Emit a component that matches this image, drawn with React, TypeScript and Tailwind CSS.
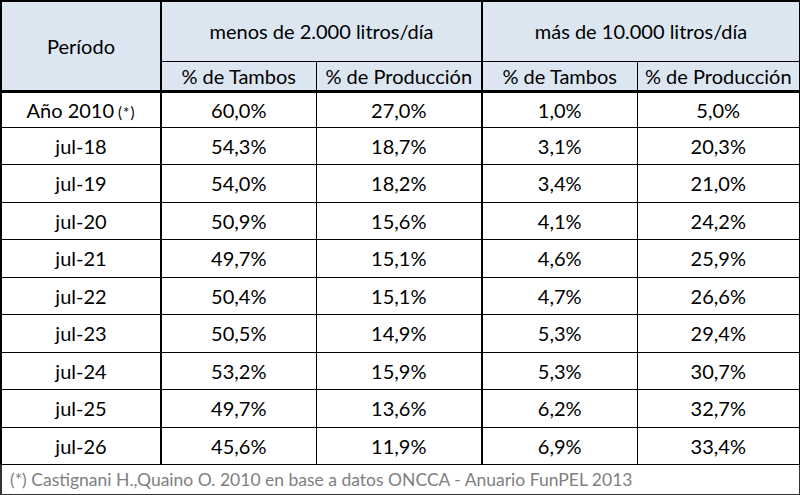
const rows: [string, string, string, string, string][] = [
  ["Año 2010", "60,0%", "27,0%", "1,0%", "5,0%"],
  ["jul-18", "54,3%", "18,7%", "3,1%", "20,3%"],
  ["jul-19", "54,0%", "18,2%", "3,4%", "21,0%"],
  ["jul-20", "50,9%", "15,6%", "4,1%", "24,2%"],
  ["jul-21", "49,7%", "15,1%", "4,6%", "25,9%"],
  ["jul-22", "50,4%", "15,1%", "4,7%", "26,6%"],
  ["jul-23", "50,5%", "14,9%", "5,3%", "29,4%"],
  ["jul-24", "53,2%", "15,9%", "5,3%", "30,7%"],
  ["jul-25", "49,7%", "13,6%", "6,2%", "32,7%"],
  ["jul-26", "45,6%", "11,9%", "6,9%", "33,4%"],
]

export default function App() {
  return (
    <div className="w-[800px] h-[495px] bg-white font-['Lato','Liberation_Sans',sans-serif] text-black overflow-hidden">
      <table className="border-collapse table-fixed w-[799px] text-[20px] leading-none">
        <colgroup>
          <col className="w-[160px]" />
          <col className="w-[155px]" />
          <col className="w-[166px]" />
          <col className="w-[155px]" />
          <col className="w-[163px]" />
        </colgroup>
        <thead>
          <tr className="h-[60px] bg-[#dce6f1]">
            <th rowSpan={2} className="border-2 border-b-[3px] border-black font-normal text-center">
              Período
            </th>
            <th colSpan={2} className="border border-t-2 border-r-2 border-black font-normal text-center">
              menos de 2.000 litros/día
            </th>
            <th colSpan={2} className="border border-t-2 border-r-2 border-black font-normal text-center">
              más de 10.000 litros/día
            </th>
          </tr>
          <tr className="h-[30px] bg-[#dce6f1]">
            <th className="border border-b-[3px] border-black font-normal">% de Tambos</th>
            <th className="border border-r-2 border-b-[3px] border-black font-normal">% de Producción</th>
            <th className="border border-b-[3px] border-black font-normal">% de Tambos</th>
            <th className="border border-r-2 border-b-[3px] border-black font-normal">% de Producción</th>
          </tr>
        </thead>
        <tbody>
          {rows.map((r, i) => (
            <tr key={r[0]} className={i === 0 ? "h-[36px]" : "h-[37.5px]"}>
              <td className="border border-l-2 border-r-2 border-black text-center">
                {r[0]}
                {i === 0 && <span className="text-[15px] ml-1 tracking-[1px]">(*)</span>}
              </td>
              <td className="border border-black text-center">{r[1]}</td>
              <td className="border border-r-2 border-black text-center">{r[2]}</td>
              <td className="border border-black text-center">{r[3]}</td>
              <td className="border border-r-2 border-black text-center">{r[4]}</td>
            </tr>
          ))}
          <tr className="h-[30px]">
            <td colSpan={5} className="border-2 border-t border-[#333] pl-2 text-[17.5px] text-[#7f7f7f]">
              (*) Castignani H.,Quaino O. 2010 en base a datos ONCCA - Anuario FunPEL 2013
            </td>
          </tr>
        </tbody>
      </table>
    </div>
  )
}
